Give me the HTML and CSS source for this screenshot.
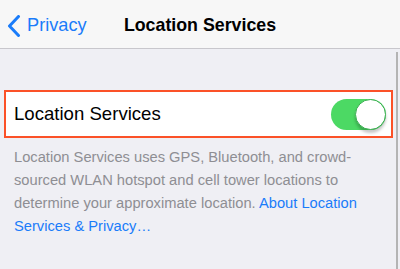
FILE: index.html
```html
<!DOCTYPE html>
<html>
<head>
<meta charset="utf-8">
<link rel="stylesheet" href="styles.css">
</head>
<body>
<div class="screen">
  <header class="nav">
    <a class="back">
      <svg class="chev" width="14" height="22" viewBox="0 0 14 22"><path d="M11.5 1.5 L2.5 11 L11.5 20.5" fill="none" stroke="#1a7cfa" stroke-width="3" stroke-linecap="round" stroke-linejoin="round"/></svg>
      <span>Privacy</span>
    </a>
    <h1 class="title">Location Services</h1>
  </header>
  <main class="content">
    <div class="cell">
      <span class="cell-label">Location Services</span>
      <span class="toggle"><span class="knob"></span></span>
    </div>
    <p class="footer">Location Services uses GPS, Bluetooth, and crowd-sourced WLAN hotspot and cell tower locations to determine your approximate location. <a class="link">About Location Services &amp; Privacy…</a></p>
  </main>
  <div class="scrollbar"></div>
</div>
</body>
</html>
```
FILE: styles.css
```css
* { box-sizing: border-box; }
html, body { margin: 0; padding: 0; }
body {
  width: 400px;
  height: 269px;
  overflow: hidden;
  font-family: "Liberation Sans", Arial, sans-serif;
  background: #efeff4;
}
.screen {
  position: relative;
  width: 400px;
  height: 269px;
  display: flex;
  flex-direction: column;
}
.nav {
  height: 49px;
  padding-top: 3px;
  background: #f7f7f7;
  border-bottom: 1px solid #c8c7cc;
  display: flex;
  align-items: center;
  position: relative;
  flex: none;
}
.back {
  display: flex;
  align-items: center;
  gap: 6px;
  padding-left: 7px;
  color: #1a7cfa;
  font-size: 18.2px;
}
.chev { display: block; }
.title {
  position: absolute;
  left: 0;
  right: 0;
  top: 3px;
  bottom: 0;
  margin: 0;
  display: flex;
  align-items: center;
  justify-content: center;
  font-size: 17.8px;
  font-weight: bold;
  color: #000;
  pointer-events: none;
}
.content {
  flex: 1;
  padding-top: 41px;
  padding-left: 4px;
  padding-right: 7px;
}
.cell {
  height: 48px;
  background: #fff;
  border: 2px solid #fb5128;
  display: flex;
  align-items: center;
  justify-content: space-between;
  padding: 0 5px 0 8px;
}
.cell-label {
  font-size: 18.6px;
  color: #000;
}
.toggle {
  width: 55px;
  height: 31px;
  border-radius: 16px;
  background: #4cd964;
  position: relative;
  display: block;
}
.knob {
  position: absolute;
  right: 0;
  top: 0;
  width: 31px;
  height: 31px;
  border-radius: 50%;
  background: #fff;
  border: 1px solid #3cb052;
  box-shadow: 0 3px 3px rgba(0,0,0,0.22);
}
.footer {
  margin: 0;
  padding: 8px 28px 0 10px;
  font-size: 14.7px;
  line-height: 23px;
  color: #8e8e93;
}
.link { color: #1a7cfa; }
.scrollbar {
  position: absolute;
  right: 2px;
  top: 52px;
  bottom: 0;
  width: 2px;
  background: #b4b4b4;
}
```
